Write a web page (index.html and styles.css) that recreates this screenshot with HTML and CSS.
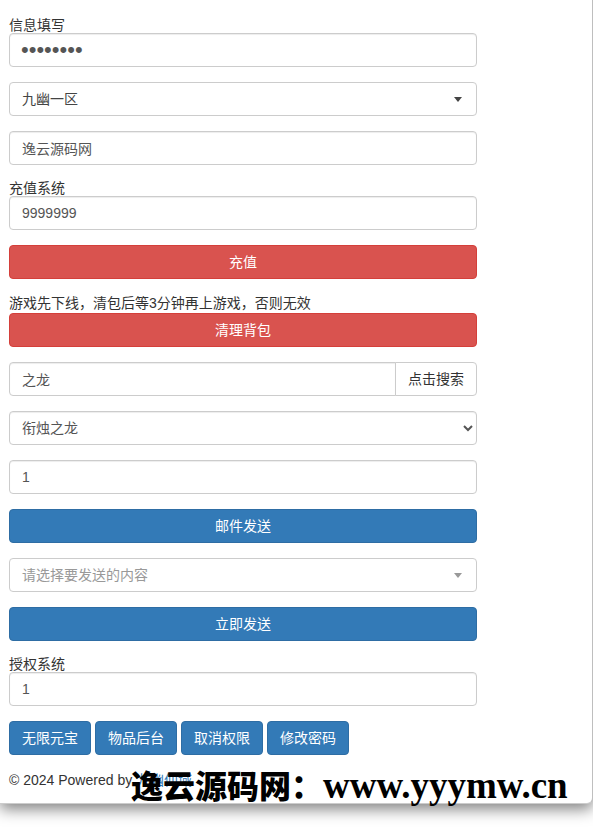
FILE: index.html
```html
<!DOCTYPE html>
<html lang="zh-CN">
<head>
<meta charset="utf-8">
<title>信息填写</title>
<link rel="stylesheet" href="styles.css">
</head>
<body>
<div class="card">
  <form class="form">
    <label class="lbl">信息填写</label>
    <input class="ctl pwd" type="password" value="12345678">
    <div class="ctl s2 g"><span>九幽一区</span><b class="arrow dark"></b></div>
    <input class="ctl g" type="text" value="逸云源码网">
    <label class="lbl g">充值系统</label>
    <input class="ctl" type="text" value="9999999">
    <button type="button" class="btn red g">充值</button>
    <div class="note g">游戏先下线，清包后等3分钟再上游戏，否则无效</div>
    <button type="button" class="btn red">清理背包</button>
    <div class="igroup g">
      <input class="ctl ig-in" type="text" value="之龙">
      <button type="button" class="ig-btn">点击搜索</button>
    </div>
    <select class="ctl sel g"><option>衔烛之龙</option></select>
    <input class="ctl g" type="text" value="1">
    <button type="button" class="btn blue g">邮件发送</button>
    <div class="ctl s2 g"><span class="ph">请选择要发送的内容</span><b class="arrow light"></b></div>
    <button type="button" class="btn blue g">立即发送</button>
    <label class="lbl g">授权系统</label>
    <input class="ctl" type="text" value="1">
    <div class="btnrow g">
      <button type="button" class="btn blue sm">无限元宝</button>
      <button type="button" class="btn blue sm">物品后台</button>
      <button type="button" class="btn blue sm">取消权限</button>
      <button type="button" class="btn blue sm">修改密码</button>
    </div>
  </form>
  <footer class="foot">© 2024 Powered by <a href="#" class="link">九幽仙域</a></footer>
</div>
<div class="wm">逸云源码网：<span class="wm-en">www.yyymw.cn</span></div>
</body>
</html>
```

FILE: styles.css
```css
* { box-sizing: border-box; }
html, body { margin: 0; padding: 0; background: #fff; }
body {
  width: 593px;
  height: 831px;
  overflow: hidden;
  position: relative;
  font-family: "Liberation Sans", Arial, "Noto Sans CJK SC", sans-serif;
  font-size: 14px;
  color: #333;
}
.card {
  width: 593px;
  background: #fff;
  border-right: 1px solid rgba(0,0,0,.25);
  border-bottom: 1px solid rgba(0,0,0,.2);
  border-bottom-right-radius: 6px;
  box-shadow: 0 5px 15px rgba(0,0,0,.5);
  padding: 17px 0 13px 9px;
}
.form {
  width: 468px;
  display: flex;
  flex-direction: column;
}
.g { margin-top: 15px; }
.lbl {
  display: block;
  line-height: 16px;
  height: 16px;
  font-weight: normal;
}
.ctl {
  display: block;
  width: 100%;
  height: 34px;
  padding: 6px 12px;
  font-family: inherit;
  font-size: 14px;
  line-height: 20px;
  color: #555;
  background: #fff;
  border: 1px solid #ccc;
  border-radius: 4px;
  box-shadow: inset 0 1px 1px rgba(0,0,0,.075);
  outline: none;
}
.pwd {
  font-family: "Liberation Sans", Arial, sans-serif;
  font-size: 22px;
  letter-spacing: 0;
  padding: 6px 11px;
  color: #555;
}
.s2 {
  position: relative;
  box-shadow: none;
  border-color: #ccc;
  color: #444;
}
.s2 .ph { color: #999; }
.arrow {
  position: absolute;
  right: 14px;
  top: 14px;
  width: 0;
  height: 0;
  border-style: solid;
  border-width: 5px 4px 0 4px;
}
.arrow.dark { border-color: #444 transparent transparent transparent; }
.arrow.light { border-color: #999 transparent transparent transparent; }
.sel { padding: 6px 8px; }
.note {
  line-height: 19px;
  height: 19px;
  color: #333;
}
.btn {
  display: block;
  width: 100%;
  height: 34px;
  padding: 6px 12px;
  font-family: inherit;
  font-size: 14px;
  line-height: 20px;
  color: #fff;
  border: 1px solid;
  border-radius: 4px;
  text-align: center;
  cursor: pointer;
}
.red { background: #d9534f; border-color: #d43f3a; }
.blue { background: #337ab7; border-color: #2e6da4; }
.igroup { display: flex; }
.ig-in {
  flex: 1;
  width: auto;
  min-width: 0;
  border-top-right-radius: 0;
  border-bottom-right-radius: 0;
}
.ig-btn {
  flex: none;
  white-space: nowrap;
  height: 34px;
  margin-left: -1px;
  padding: 6px 12px;
  font-family: inherit;
  font-size: 14px;
  line-height: 20px;
  color: #333;
  background: #fff;
  border: 1px solid #ccc;
  border-radius: 0 4px 4px 0;
}
.btnrow { display: flex; gap: 4px; }
.btn.sm { width: auto; white-space: nowrap; }
.foot {
  margin-top: 15px;
  line-height: 20px;
  color: #333;
}
.link { color: #337ab7; text-decoration: none; }
.wm {
  position: absolute;
  left: 131px;
  top: 764px;
  line-height: 40px;
  white-space: nowrap;
  color: #000;
  font-family: "Noto Sans CJK SC", sans-serif;
  font-weight: 900;
  font-size: 32px;
}
.wm-en {
  font-family: "Liberation Serif", "Times New Roman", serif;
  font-weight: bold;
  font-size: 37px;
}
```
